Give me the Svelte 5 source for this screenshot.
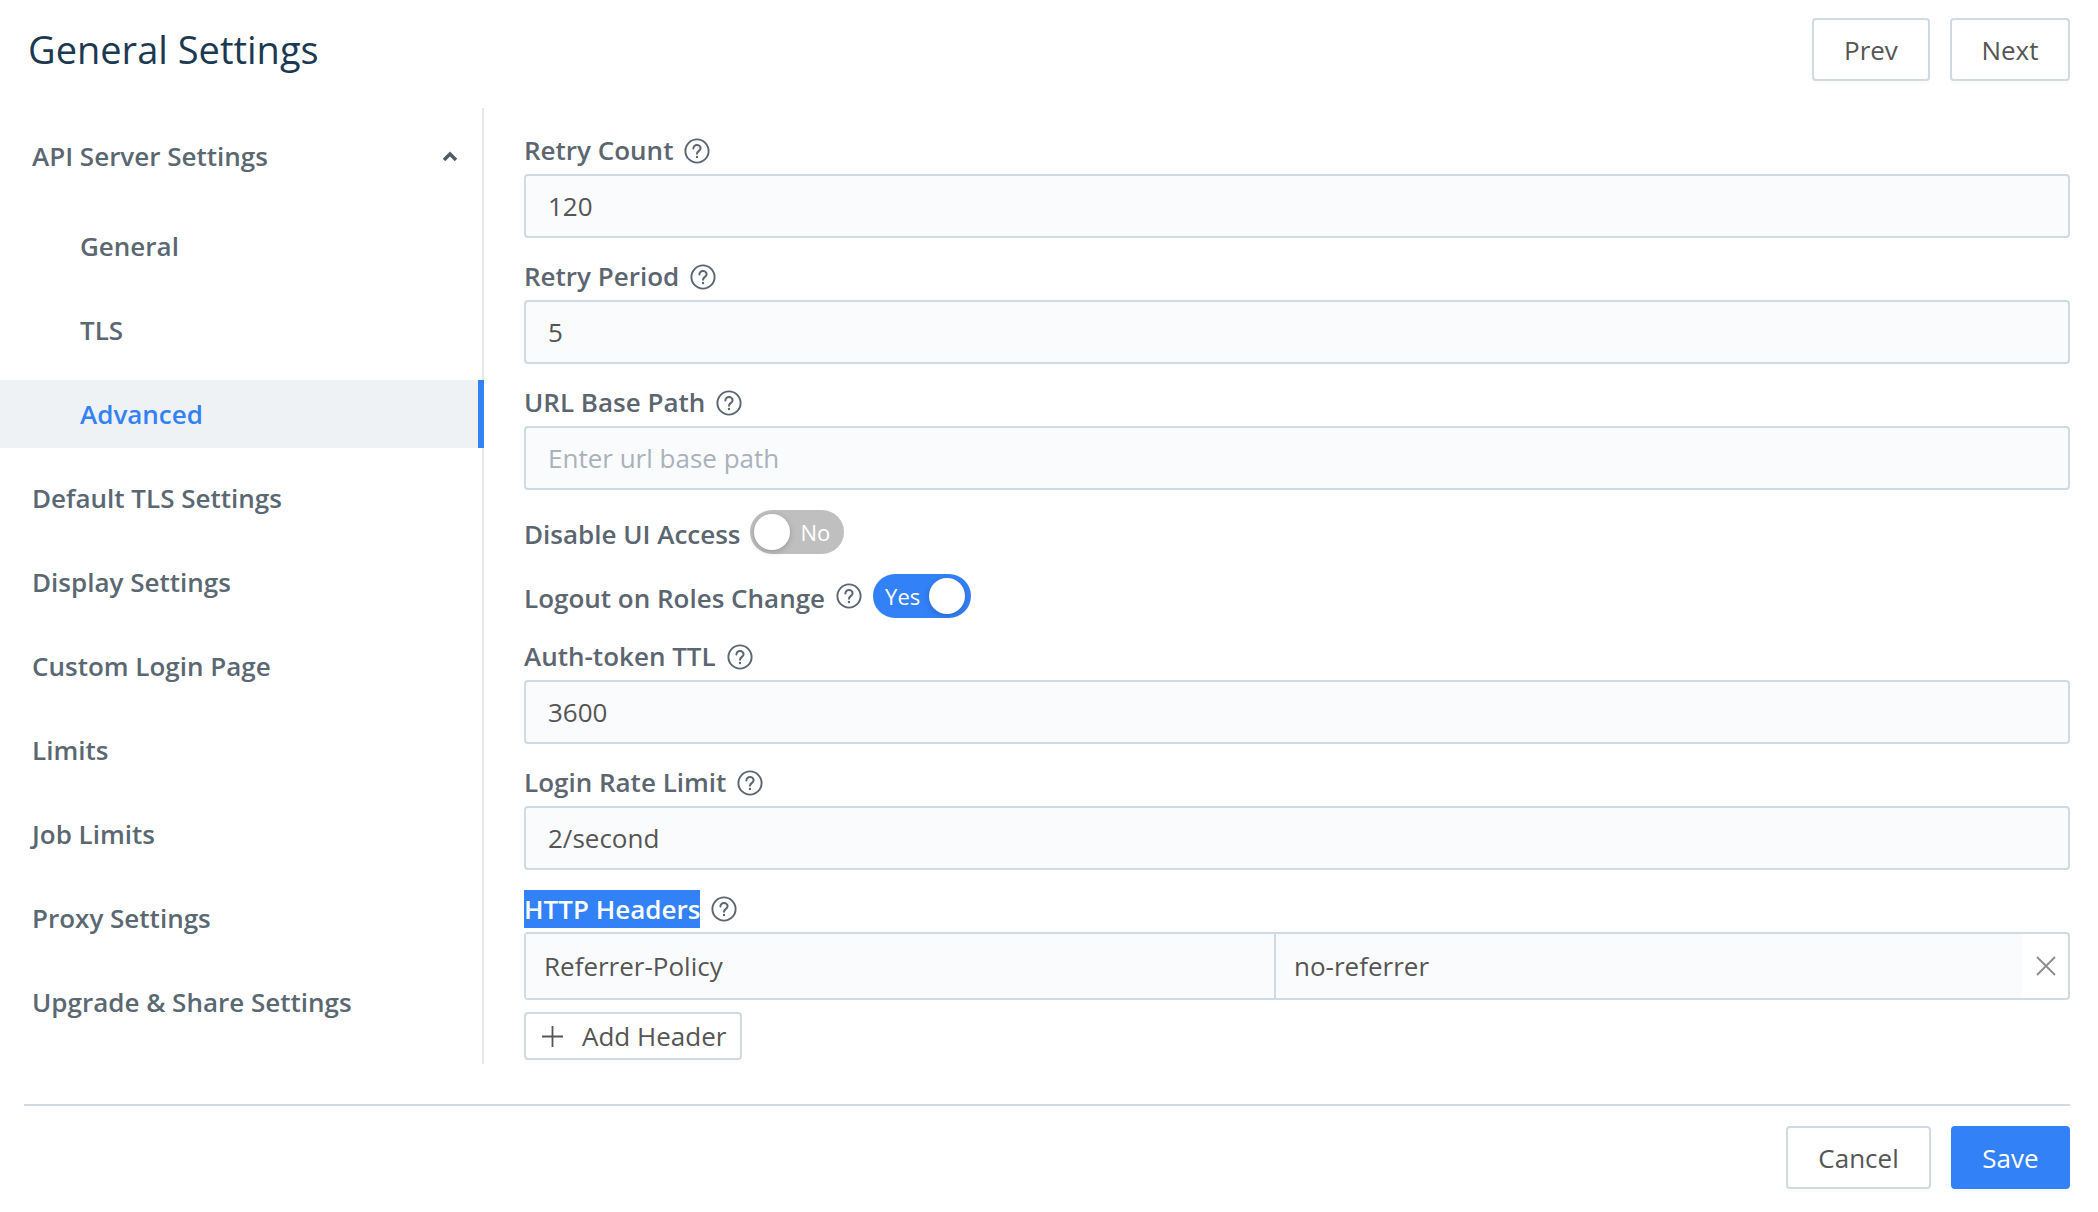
<script lang="ts">
  const nav = ['Default TLS Settings', 'Display Settings', 'Custom Login Page', 'Limits', 'Job Limits', 'Proxy Settings', 'Upgrade & Share Settings'];
  const subNav = ['General', 'TLS', 'Advanced'];
  const active = 'Advanced';
</script>

{#snippet help()}
  <svg class="help" width="26" height="26" viewBox="0 0 26 26" fill="none" stroke="#5c6670" stroke-width="2">
    <circle cx="13" cy="13" r="11.6" stroke-width="1.9" />
    <path d="M9.4 10.4c0-2 1.6-3.4 3.6-3.4s3.6 1.4 3.6 3.2c0 2.6-3.6 2.8-3.6 5.6" stroke-linecap="round" />
    <circle cx="13" cy="19" r="1.2" fill="#5c6670" stroke="none" />
  </svg>
{/snippet}

{#snippet field(label: string, value: string, placeholder = '')}
  <div class="field">
    <div class="label"><span class="field-name">{label}</span>{@render help()}</div>
    <input class="input" {value} {placeholder} />
  </div>
{/snippet}

<div class="page">
  <header class="top">
    <h1>General Settings</h1>
    <div class="actions">
      <button class="btn">Prev</button>
      <button class="btn">Next</button>
    </div>
  </header>

  <div class="body">
    <nav class="side">
      <div class="nav-item head">
        <span>API Server Settings</span>
        <svg width="16" height="10" viewBox="0 0 16 10" fill="none" stroke="#4f5a63" stroke-width="3.4"><path d="M2 9l6-6 6 6" /></svg>
      </div>
      <div class="sub">
        {#each subNav as item}
          <div class="nav-item child" class:active={item === active}>{item}</div>
        {/each}
      </div>
      {#each nav as item}
        <div class="nav-item">{item}</div>
      {/each}
    </nav>

    <form class="form">
      {@render field('Retry Count', '120')}
      {@render field('Retry Period', '5')}
      {@render field('URL Base Path', '', 'Enter url base path')}

      <div class="switch-row first">
        <span class="label-text">Disable UI Access</span>
        <span class="switch off"><i class="knob"></i><span>No</span></span>
      </div>
      <div class="switch-row last">
        <span class="label-text">Logout on Roles Change</span>
        {@render help()}
        <span class="switch on"><span>Yes</span><i class="knob"></i></span>
      </div>

      {@render field('Auth-token TTL', '3600')}
      {@render field('Login Rate Limit', '2/second')}

      <div class="label headers-label"><span class="selected">HTTP Headers</span>{@render help()}</div>
      <div class="header-row">
        <input class="cell key" value="Referrer-Policy" />
        <input class="cell" value="no-referrer" />
        <span class="remove">
          <svg width="20" height="20" viewBox="0 0 20 20" stroke="#8c8c8c" stroke-width="1.8"><path d="M1 1l18 18M19 1L1 19" /></svg>
        </span>
      </div>
      <button type="button" class="btn add">
        <svg width="21" height="21" viewBox="0 0 21 21" stroke="#555" stroke-width="1.8"><path d="M10.5 0v21M0 10.5h21" /></svg>
        <span>Add Header</span>
      </button>
    </form>
  </div>

  <footer class="foot">
    <button class="btn cancel">Cancel</button>
    <button class="btn primary">Save</button>
  </footer>
</div>

<style>
  :global(body) {
    background: #fff;
    font-family: "Open Sans", sans-serif;
  }

  .page {
    width: 2098px;
    height: 1212px;
    padding-right: 28px;
    box-sizing: border-box;
  }

  .top {
    display: flex;
    justify-content: space-between;
    align-items: flex-start;
    padding: 18px 0 0 28px;
    height: 108px;
    box-sizing: border-box;
  }

  h1 {
    margin: 8px 0 0;
    font-size: 38px;
    line-height: 46px;
    font-weight: 400;
    color: #1b3a52;
  }

  .actions,
  .foot {
    display: flex;
    gap: 20px;
  }

  .btn {
    height: 63px;
    min-width: 118px;
    padding: 0 29.5px;
    box-sizing: border-box;
    border: 2px solid #d0dae3;
    border-radius: 4px;
    background: #fff;
    color: #555;
    font: 400 26px "Open Sans", sans-serif;
    box-shadow: 0 3px 0 rgba(0, 0, 0, 0.015);
  }

  .body {
    display: flex;
    height: 956px;
  }

  .side {
    width: 484px;
    flex-shrink: 0;
    padding-top: 14px;
    box-sizing: border-box;
    border-right: 2px solid #e4e8ec;
  }

  .nav-item {
    display: flex;
    justify-content: space-between;
    align-items: center;
    height: 68px;
    margin-bottom: 16px;
    padding: 0 32px;
    font-size: 26px;
    font-weight: 600;
    color: #5a6872;
  }

  .head {
    margin-bottom: 22px;
  }

  .head svg {
    margin-right: -8px;
  }

  .child {
    padding-left: 80px;
  }

  .child.active {
    margin-right: -2px;
    background: #eef2f5;
    border-right: 6px solid #3381f7;
    color: #3381f7;
  }

  .form {
    flex: 1;
    padding: 27px 0 0 40px;
    min-width: 0;
  }

  .field {
    margin-bottom: 23px;
  }

  .label,
  .switch-row {
    display: flex;
    align-items: center;
    gap: 11px;
    font-size: 26px;
    font-weight: 600;
    color: #5c6670;
  }

  .label {
    height: 32px;
    margin-bottom: 7px;
  }

  .field-name {
    margin-top: -2px;
  }

  .input,
  .cell {
    display: block;
    box-sizing: border-box;
    border: 2px solid #d0dae3;
    background: #fafbfd;
    font: 400 26px "Open Sans", sans-serif;
    color: #555;
    outline: none;
  }

  .input {
    width: 100%;
    height: 64px;
    padding: 0 22px;
    border-radius: 4px;
  }

  .input::placeholder {
    color: #a9b2ba;
  }

  .switch-row {
    height: 44px;
    margin-bottom: 20px;
  }

  .switch-row .label-text {
    margin-top: 4px;
  }

  .switch-row.first {
    gap: 9px;
    margin-top: -3px;
  }

  .switch-row.last {
    margin-bottom: 23px;
  }

  .switch {
    display: flex;
    align-items: center;
    height: 44px;
    padding: 0 4px;
    box-sizing: border-box;
    border-radius: 22px;
    color: #fff;
    font-size: 22px;
    font-weight: 400;
    gap: 11px;
  }

  .switch.off {
    width: 94px;
    background: #bfbfbf;
  }

  .switch.on {
    width: 98px;
    padding-left: 12px;
    background: #3381f7;
    gap: 9px;
  }

  .knob {
    width: 36px;
    height: 36px;
    flex-shrink: 0;
    border-radius: 50%;
    background: #fff;
    box-shadow: 0 2px 6px rgba(0, 0, 0, 0.2);
  }

  .headers-label {
    height: 38px;
    margin: -3px 0 4px;
  }

  .selected {
    background: #3381f7;
    color: #fff;
    line-height: 38px;
  }

  .header-row {
    display: flex;
    height: 68px;
    box-sizing: border-box;
    border: 2px solid #d0dae3;
    border-radius: 4px;
    background: #fff;
  }

  .cell {
    height: 100%;
    border: none;
    padding: 0 18px;
  }

  .cell.key {
    width: 750px;
    border-right: 2px solid #d0dae3;
  }

  .cell:not(.key) {
    flex: 1;
    min-width: 0;
  }

  .remove {
    display: flex;
    align-items: center;
    justify-content: center;
    width: 46px;
    padding-left: 2px;
    box-sizing: border-box;
    flex-shrink: 0;
  }

  .add {
    display: flex;
    align-items: center;
    gap: 19px;
    height: 48px;
    margin-top: 12px;
    padding: 0 14px 0 16px;
  }

  .foot {
    justify-content: flex-end;
    margin: 40px 0 0 24px;
    padding-top: 20px;
    border-top: 2px solid #d0dae3;
  }

  .cancel {
    padding: 0 30px;
  }

  .primary {
    background: #3381f7;
    border-color: #3381f7;
    color: #fff;
  }
</style>
